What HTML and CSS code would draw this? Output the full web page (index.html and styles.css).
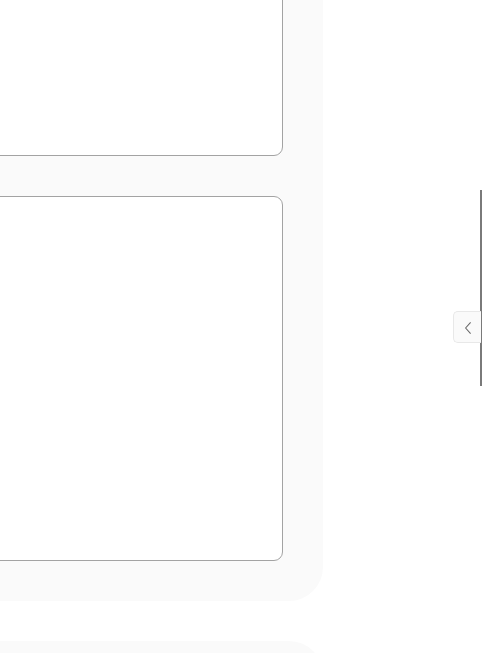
FILE: index.html
```html
<!DOCTYPE html>
<html lang="en">
<head>
  <meta charset="UTF-8">
  <meta name="viewport" content="width=device-width, initial-scale=1.0">
  <title>Panels</title>

  <link rel="stylesheet" href="styles.css">
</head>
<body>

  <!-- Main column with panels -->
  <main class="column">
    <section class="panel">
      <div class="card card-top"></div>
      <div class="card card-main"></div>
    </section>
    <section class="panel panel-next"></section>
  </main>

  <!-- Side drawer handle -->
  <aside class="drawer">
    <div class="drawer-edge"></div>
    <button class="drawer-toggle" id="drawer-toggle">
      <svg width="28" height="32" viewBox="0 0 28 32">
        <polyline points="17,10.5 12,16 17,21.5" fill="none" stroke="#666" stroke-width="1.1" stroke-linecap="round" stroke-linejoin="round"/>
      </svg>
    </button>
  </aside>

</body>
</html>
```

FILE: styles.css
```css
* {
  margin: 0;
  padding: 0;
  box-sizing: border-box;
}

body {
  font-family: "Liberation Sans", Arial, sans-serif;
  background: white;
  width: 483px;
  height: 653px;
  overflow: hidden;
  display: flex;
}

.column {
  width: 323px;
  margin-top: -225px;
  display: flex;
  flex-direction: column;
  gap: 40px;
  flex-shrink: 0;
}

.panel {
  background-color: #fafafa;
  border-radius: 0 0 34px 0;
  padding: 40px 40px 40px 0;
  display: flex;
  flex-direction: column;
  gap: 40px;
}

.panel-next {
  border-radius: 0 34px 0 0;
  height: 300px;
}

.card {
  background: white;
  border: 1px solid #a3a3a3;
  border-radius: 9px;
  margin-left: -12px;
}

.card-top {
  height: 341px;
}

.card-main {
  height: 365px;
}

.drawer {
  flex: 1;
  position: relative;
}

.drawer-edge {
  position: absolute;
  top: 190px;
  right: 1px;
  width: 2px;
  height: 196px;
  background-color: #7a7a7a;
}

.drawer-toggle {
  position: absolute;
  top: 311px;
  right: 2px;
  width: 28px;
  height: 32px;
  background-color: #fafafa;
  border: 1px solid #e8e8e8;
  border-right: none;
  border-radius: 5px 0 0 5px;
  display: flex;
  cursor: pointer;
}
```
